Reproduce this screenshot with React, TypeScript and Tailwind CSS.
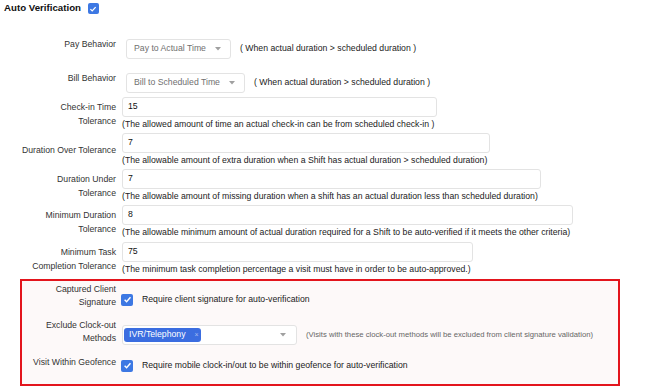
import React from "react";

const Check = ({ size = 12 }: { size?: number }) => (
  <span
    className="inline-flex items-center justify-center rounded-[2px] bg-[#3d78e3] shrink-0"
    style={{ width: size, height: size }}
  >
    <svg width={size - 3} height={size - 3} viewBox="0 0 10 10">
      <path d="M1.8 5.2 L4 7.4 L8.3 2.6" fill="none" stroke="#fff" strokeWidth="1.6" />
    </svg>
  </span>
);

const Caret = () => (
  <svg width="6" height="4" viewBox="0 0 6 4">
    <polygon points="0,0 6,0 3,3.5" fill="#a0a0a0" />
  </svg>
);

interface ISelectRow {
  label: string;
  value: string;
  width: string;
  hint: string;
}

// dropdown row with a hint after it
const SelectRow = ({ label, value, width, hint }: ISelectRow) => (
  <div className="flex items-start">
    <div className="w-[116px] text-right leading-[11px]">{label}</div>
    <div
      className={`ml-[10px] h-[20px] ${width} flex items-center justify-between pl-[7px] pr-[9px] border border-[#e3e3e3] rounded-[3px] bg-white text-[#707070]`}
    >
      <span>{value}</span>
      <Caret />
    </div>
    <div className="ml-[9px] self-center text-[#222]">{hint}</div>
  </div>
);

interface IInputRow {
  label: React.ReactNode;
  value: string;
  width: string;
  hint: string;
  className?: string;
}

const InputRow = ({ label, value, width, hint, className }: IInputRow) => (
  <div className={`flex items-stretch ${className || ""}`}>
    <div className="w-[116px] flex items-center justify-end text-right leading-[14px]">
      <div>{label}</div>
    </div>
    <div className="ml-[6px]">
      <div
        className={`h-[20px] ${width} flex items-center px-[5px] border border-[#e3e3e3] rounded-[3px] bg-white text-[#111]`}
      >
        {value}
      </div>
      <div className="leading-[14px] text-[#222]">{hint}</div>
    </div>
  </div>
);

export default function App() {
  return (
    <div className="w-[670px] h-[387px] overflow-hidden bg-white font-['Liberation_Sans',Arial,sans-serif] text-[8.7px] text-[#333]">
      <div className="flex items-center h-[17px] pl-[4px] gap-[7px]">
        <span className="text-[9.7px] font-bold text-[#111]">Auto Verification</span>
        <Check size={11} />
      </div>

      <div className="mt-[22px] flex flex-col gap-[14px]">
        <SelectRow
          label="Pay Behavior"
          value="Pay to Actual Time"
          width="w-[105px]"
          hint="( When actual duration > scheduled duration )"
        />
        <SelectRow
          label="Bill Behavior"
          value="Bill to Scheduled Time"
          width="w-[119px]"
          hint="( When actual duration > scheduled duration )"
        />
      </div>

      <div className="mt-[4px] flex flex-col gap-[2px]">
        <InputRow
          label={<>Check-in Time<br />Tolerance</>}
          value="15"
          width="w-[315px]"
          hint="(The allowed amount of time an actual check-in can be from scheduled check-in )"
        />
        <InputRow
          label="Duration Over Tolerance"
          value="7"
          width="w-[368px]"
          hint="(The allowable amount of extra duration when a Shift has actual duration > scheduled duration)"
        />
        <InputRow
          label={<>Duration Under<br />Tolerance</>}
          value="7"
          width="w-[419px]"
          hint="(The allowable amount of missing duration when a shift has an actual duration less than scheduled duration)"
        />
        <InputRow
          label={<>Minimum Duration<br />Tolerance</>}
          value="8"
          width="w-[451px]"
          hint="(The allowable minimum amount of actual duration required for a Shift to be auto-verified if it meets the other criteria)"
        />
        <InputRow
          className="mt-[1px]"
          label={<>Minimum Task<br />Completion Tolerance</>}
          value="75"
          width="w-[351px]"
          hint="(The minimum task completion percentage a visit must have in order to be auto-approved.)"
        />
      </div>

      {/* highlighted section */}
      <div className="mt-[3px] ml-[20px] w-[600px] h-[107px] border-2 border-[#e3151d] bg-[#fdf9f9]">
        <div className="mt-[2px] flex items-start">
          <div className="w-[94px] text-right leading-[13px]">
            Captured Client<br />Signature
          </div>
          <div className="ml-[5px] pt-[10px] flex items-center">
            <Check />
            <span className="ml-[9px] text-[#222]">Require client signature for auto-verification</span>
          </div>
        </div>

        <div className="mt-[10px] flex items-start">
          <div className="w-[94px] text-right leading-[13px]">
            Exclude Clock-out<br />Methods
          </div>
          <div className="ml-[6px] pt-[6px] flex items-center">
            <div className="w-[175px] h-[20px] flex items-center justify-between pl-[1px] pr-[10px] border border-[#e3e3e3] rounded-[3px] bg-white">
              <span className="h-[14px] w-[77px] flex items-center pl-[5px] rounded-[3px] bg-[#3b6de0] text-white">
                IVR/Telephony
                <span className="ml-[9px] text-[7px] text-[#a9bdf0]">×</span>
              </span>
              <Caret />
            </div>
            <span className="ml-[9px] text-[7.7px] text-[#666]">
              (Visits with these clock-out methods will be excluded from client signature validation)
            </span>
          </div>
        </div>

        <div className="mt-[11px] flex items-start">
          <div className="w-[94px] text-right leading-[13px]">Visit Within Geofence</div>
          <div className="ml-[5px] pt-[3px] flex items-center">
            <Check />
            <span className="ml-[9px] text-[#222]">Require mobile clock-in/out to be within geofence for auto-verification</span>
          </div>
        </div>
      </div>
    </div>
  );
}
